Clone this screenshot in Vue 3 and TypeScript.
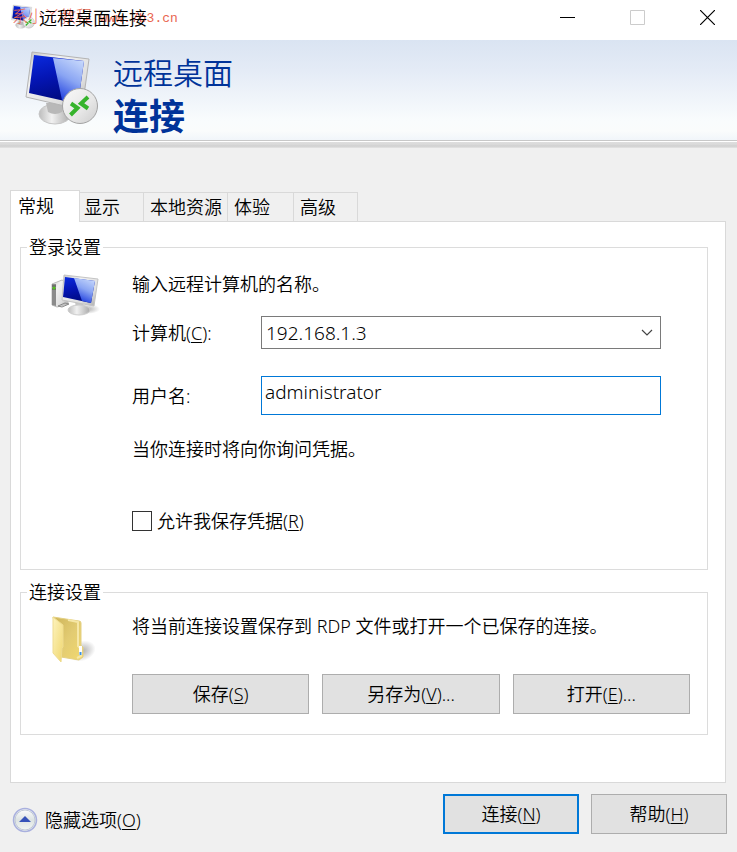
<script setup lang="ts">
import { ref } from 'vue'

interface Tab {
  id: string
  title: string
}

interface Action {
  id: string
  text: string
  key: string
  tail: string
}

const tabs: Tab[] = [
  { id: 'general', title: '常规' },
  { id: 'display', title: '显示' },
  { id: 'local', title: '本地资源' },
  { id: 'experience', title: '体验' },
  { id: 'advanced', title: '高级' },
]

const fileActions: Action[] = [
  { id: 'save', text: '保存', key: 'S', tail: '' },
  { id: 'save-as', text: '另存为', key: 'V', tail: '...' },
  { id: 'open', text: '打开', key: 'E', tail: '...' },
]

const activeTab = ref('general')
const computer = ref('192.168.1.3')
const userName = ref('administrator')
const allowSave = ref(false)
</script>

<template>
  <main class="window">
    <svg class="defs" width="0" height="0" aria-hidden="true">
      <defs>
        <linearGradient id="frame" x1="0" y1="0" x2="1" y2="1">
          <stop offset="0" stop-color="#c4c4c4" />
          <stop offset="0.3" stop-color="#f1f1f1" />
          <stop offset="0.7" stop-color="#dedede" />
          <stop offset="1" stop-color="#a9a9a9" />
        </linearGradient>
        <linearGradient id="screen" x1="0" y1="0" x2="0.3" y2="1">
          <stop offset="0" stop-color="#0a2be0" />
          <stop offset="0.5" stop-color="#0415b4" />
          <stop offset="1" stop-color="#000a80" />
        </linearGradient>
        <linearGradient id="shine" x1="0.7" y1="0" x2="0.3" y2="1">
          <stop offset="0" stop-color="#c3d5fb" />
          <stop offset="0.45" stop-color="#8aa5f3" />
          <stop offset="1" stop-color="#1232dc" />
        </linearGradient>
        <linearGradient id="base" x1="0" y1="0" x2="1" y2="0">
          <stop offset="0" stop-color="#bdbdbd" />
          <stop offset="0.4" stop-color="#f1f1f1" />
          <stop offset="1" stop-color="#a9a9a9" />
        </linearGradient>
        <linearGradient id="disc" x1="0" y1="0" x2="1" y2="1">
          <stop offset="0" stop-color="#f9f9f9" />
          <stop offset="0.6" stop-color="#e6e6e6" />
          <stop offset="1" stop-color="#cccccc" />
        </linearGradient>
        <linearGradient id="leaf" x1="0" y1="0" x2="1" y2="1">
          <stop offset="0" stop-color="#fdf3bd" />
          <stop offset="1" stop-color="#f0d76f" />
        </linearGradient>
        <linearGradient id="inner" x1="0" y1="0" x2="1" y2="1">
          <stop offset="0" stop-color="#cdb458" />
          <stop offset="0.5" stop-color="#e2cb72" />
          <stop offset="1" stop-color="#f2d96f" />
        </linearGradient>
        <linearGradient id="orb" x1="0" y1="0" x2="0" y2="1">
          <stop offset="0" stop-color="#ffffff" />
          <stop offset="0.5" stop-color="#dde3e3" />
          <stop offset="1" stop-color="#f6faf4" />
        </linearGradient>
        <radialGradient id="shade">
          <stop offset="0" stop-color="#777777" stop-opacity="0.6" />
          <stop offset="1" stop-color="#777777" stop-opacity="0" />
        </radialGradient>
        <symbol id="remote" viewBox="0 0 74 76">
          <ellipse cx="30" cy="63" rx="16" ry="10" fill="url(#base)" stroke="#c6c6c6" />
          <path d="M21 52h18l-2 9q-7 4-14 0z" fill="#b8b8b8" />
          <path d="M7 1 64 8 57 59 1 46Z" fill="url(#frame)" stroke="#b4b4b4" />
          <path d="M9 4 59 10 53 53 4 42Z" fill="url(#screen)" />
          <path d="M28 7 59 10 53 53 37 49Z" fill="url(#shine)" />
          <circle cx="55" cy="55" r="17.5" fill="url(#disc)" stroke="#a3a3a3" />
          <path d="m46 52.500 6.500 4.500-7 7M63 46l-7 6.500 7 5" fill="none" stroke="#36b42c" stroke-width="4" />
        </symbol>
      </defs>
    </svg>

    <header class="titlebar">
      <svg class="title-icon" aria-hidden="true"><use href="#remote" /></svg>
      <h1 class="title">远程桌面连接</h1>
      <span class="mark"><span class="mark-name">系小丫教程</span> www.7b3.cn</span>
      <div class="window-buttons">
        <button type="button" class="window-button" aria-label="最小化">
          <svg width="15" height="15" viewBox="0 0 15 15"><path d="M0 7.5h15" stroke="#000" /></svg>
        </button>
        <button type="button" class="window-button" aria-label="最大化" disabled>
          <svg width="15" height="15" viewBox="0 0 15 15"><path d="M.5.5h14v14H.5z" fill="none" stroke="#ccc" /></svg>
        </button>
        <button type="button" class="window-button" aria-label="关闭">
          <svg width="15" height="15" viewBox="0 0 15 15"><path d="m0 0 15 15M15 0 0 15" stroke="#000" stroke-width="1.2" /></svg>
        </button>
      </div>
    </header>

    <section class="banner">
      <svg class="banner-icon" aria-hidden="true"><use href="#remote" /></svg>
      <h2 class="banner-text">远程桌面<strong>连接</strong></h2>
    </section>

    <div class="content">
      <div class="tabs" role="tablist">
        <button
          v-for="tab in tabs"
          :key="tab.id"
          type="button"
          role="tab"
          class="tab"
          :class="[tab.id, { active: tab.id === activeTab }]"
          :aria-selected="tab.id === activeTab"
          @click="activeTab = tab.id"
        >{{ tab.title }}</button>
      </div>

      <div class="panel" role="tabpanel">
        <fieldset class="group login">
          <legend>登录设置</legend>
          <div class="group-body">
            <svg class="group-icon" viewBox="0 0 50 44" aria-hidden="true">
              <ellipse cx="36" cy="35" rx="13" ry="5" fill="url(#shade)" />
              <path d="M1 10 11 6l6 3v21L6 33l-5-2z" fill="url(#frame)" stroke="#bcbcbc" />
              <path d="M1 10h4v22l-4-1z" fill="#8b8b8b" />
              <path d="M1 12h4M1 15h4" stroke="#555" />
              <circle cx="3" cy="14" r="1.5" fill="#52c51c" />
              <path d="m7 32 7-3 4 1-7 3z" fill="none" stroke="#888" />
              <path d="M24 27h9l-1 8h-7z" fill="#c5c5c5" />
              <ellipse cx="28" cy="36" rx="11" ry="5" fill="url(#base)" stroke="#cccccc" />
              <path d="m13 1 34 4-4 27-32-6z" fill="url(#frame)" stroke="#c4c4c4" />
              <path d="m14 3 30 4-4 22-28-6z" fill="url(#screen)" />
              <path d="m23 4 21 3-4 22-9-2z" fill="url(#shine)" />
            </svg>
            <div class="login-fields">
              <p class="line">输入远程计算机的名称。</p>
              <div class="field computer">
                <label for="computer">计算机(<u>C</u>):</label>
                <div class="combo">
                  <select id="computer" v-model="computer">
                    <option>192.168.1.3</option>
                  </select>
                  <svg class="chevron" viewBox="0 0 12 7" aria-hidden="true"><path d="m1 1 5 5 5-5" fill="none" stroke="#444" stroke-width="1.2" /></svg>
                </div>
              </div>
              <div class="field user">
                <label for="user">用户名:</label>
                <input id="user" v-model="userName" type="text" autocomplete="off" spellcheck="false" />
              </div>
              <p class="line prompt">当你连接时将向你询问凭据。</p>
              <label class="check"><input v-model="allowSave" type="checkbox" /><span>允许我保存凭据(<u>R</u>)</span></label>
            </div>
          </div>
        </fieldset>

        <fieldset class="group connection">
          <legend>连接设置</legend>
          <div class="group-body">
            <svg class="group-icon" viewBox="0 0 50 50" aria-hidden="true">
              <ellipse cx="31" cy="37" rx="14" ry="10" fill="url(#shade)" transform="rotate(-20 31 37)" />
              <path d="m2 3 26 4q2 0 2 2v23l2 1v10l-4 3-18-3z" fill="url(#inner)" stroke="#e4d083" />
              <path d="m17 6 10 2v24l3 3v7l-4 2" fill="none" stroke="#f6e7a6" stroke-width="2" />
              <path d="m2 3 10 8v22l-1 1-1 14-8-9z" fill="url(#leaf)" stroke="#efdc90" />
              <path d="M29.500 32v9" stroke="#fff" stroke-width="3" />
              <path d="M29.500 38v3" stroke="#3c91e0" stroke-width="2" />
            </svg>
            <div>
              <p class="line">将当前连接设置保存到 RDP 文件或打开一个已保存的连接。</p>
              <div class="file-actions">
                <button v-for="action in fileActions" :key="action.id" type="button" class="button">{{ action.text }}(<u>{{ action.key }}</u>){{ action.tail }}</button>
              </div>
            </div>
          </div>
        </fieldset>
      </div>
    </div>

    <footer class="footer">
      <button type="button" class="toggle">
        <svg width="26" height="26" viewBox="0 0 26 26" aria-hidden="true">
          <circle cx="13" cy="13" r="11.500" fill="url(#orb)" stroke="#a9b0de" stroke-width="1.500" />
          <circle cx="13" cy="13" r="10" fill="none" stroke="#c0c8d6" />
          <path d="m7 15 6-6 6 6z" fill="#3653b8" />
        </svg>
        <span>隐藏选项(<u>O</u>)</span>
      </button>
      <div class="footer-actions">
        <button type="button" class="button primary">连接(<u>N</u>)</button>
        <button type="button" class="button">帮助(<u>H</u>)</button>
      </div>
    </footer>
  </main>
</template>

<style>
body {
  margin: 0;
  background: #f0f0f0;
}
</style>

<style scoped>
* {
  box-sizing: border-box;
}

.window {
  min-height: 100vh;
  background: #f0f0f0;
  color: #000;
  font: 350 18px/24px "Noto Sans", "Noto Sans CJK SC", sans-serif;
}

.defs {
  position: absolute;
}

h1,
h2,
p {
  margin: 0;
  font-weight: inherit;
}

button,
input,
select {
  margin: 0;
  font: inherit;
  color: inherit;
}

u {
  text-underline-offset: 2px;
  text-decoration-thickness: 1px;
}

.titlebar {
  position: relative;
  display: flex;
  height: 40px;
  padding-left: 11px;
  background: #fff;
}

.title-icon {
  width: 24px;
  height: 26px;
  margin: 4px 4px 0 0;
}

.title {
  position: relative;
  z-index: 1;
  padding-top: 6px;
  font-size: 18px;
}

.mark {
  position: absolute;
  left: 12px;
  top: 6px;
  color: #e9654f;
  font: 13px/24px "Liberation Mono", "Noto Sans CJK SC", monospace;
  white-space: nowrap;
}

.mark-name {
  font-size: 16px;
  font-weight: 300;
}

.window-buttons {
  display: flex;
  gap: 10px;
  height: 35px;
  margin-left: auto;
}

.window-button {
  display: flex;
  align-items: center;
  justify-content: center;
  width: 60px;
  padding: 0;
  border: 0;
  background: none;
}

.banner {
  position: relative;
  display: flex;
  height: 108px;
  padding: 11px 0 0 25px;
  background: linear-gradient(#dae4f2, #e4ebf6 30%, #f9fcfd 80%, #fafcfc 90%, #f0f5fa) 0 0 / 100% 101px no-repeat;
}

.banner::after {
  content: "";
  position: absolute;
  inset: auto 0 0;
  height: 7px;
  border-top: 1px solid #c8c8c8;
  background: linear-gradient(#fff 1px, #dfdfdf 1px, #d8d8d8 4px, #cfcfcf 5px, #e4e4e4);
}

.banner-icon {
  width: 74px;
  height: 76px;
  margin-right: 14px;
}

.banner-text {
  color: #039;
  font-size: 30px;
  line-height: 44px;
}

.banner-text strong {
  display: block;
  font-size: 36px;
  font-weight: 700;
}

.content {
  padding: 42px 11px 0 10px;
}

.tabs {
  display: flex;
  align-items: flex-end;
}

.tab {
  height: 29px;
  padding: 0 23px 0 6px;
  border: solid #d9d9d9;
  border-width: 1px 1px 0 0;
  background: #f0f0f0;
}

.tab.display {
  padding-left: 4px;
}

.tab.local {
  padding-right: 5px;
}

.tab.advanced {
  padding-right: 21px;
}

.tab.active {
  position: relative;
  height: 32px;
  margin-bottom: -1px;
  padding: 0 25px 2px 7px;
  border-width: 1px 1px 0;
  background: #fff;
}

.panel {
  padding: 13px 17px 47px 9px;
  border: 1px solid #d9d9d9;
  background: #fff;
}

.group {
  min-width: 0;
  margin: 0;
  border: 1px solid #dcdcdc;
}

.group legend {
  padding: 0 2px;
}

.login {
  padding: 13px 46px 36px 6px;
}

.connection {
  margin-top: 10px;
  padding: 10px 17px 20px 6px;
}

.group-body {
  display: grid;
  grid-template-columns: 105px 1fr;
}

.group-icon {
  width: 50px;
  height: 50px;
  margin-left: 24px;
}

.login .group-icon {
  height: 44px;
  margin-top: 2px;
}

.field {
  display: grid;
  grid-template-columns: 129px 1fr;
  align-items: center;
}

.computer {
  margin-top: 20px;
}

.user {
  margin-top: 27px;
}

.combo {
  position: relative;
}

.combo select {
  display: block;
  width: 100%;
  height: 33px;
  padding: 0 32px 0 4px;
  border: 1px solid #7a7a7a;
  border-radius: 0;
  appearance: none;
  background: #fff;
  font-size: 19px;
}

.chevron {
  position: absolute;
  right: 8px;
  top: 13px;
  width: 12px;
  height: 7px;
  pointer-events: none;
}

.user input {
  width: 100%;
  height: 39px;
  padding: 0 3px 8px;
  border: 1px solid #0078d7;
  outline: 0;
  background: #fff;
  font-size: 19px;
}

.prompt {
  margin-top: 22px;
}

.check {
  display: flex;
  align-items: center;
  gap: 5px;
  margin-top: 48px;
}

.check input {
  width: 20px;
  height: 20px;
  border: 1px solid #333;
  appearance: none;
  background: #fff;
}

.check input:checked {
  background: #333;
  box-shadow: inset 0 0 0 3px #fff;
}

.file-actions {
  display: grid;
  grid-template-columns: repeat(3, 1fr);
  gap: 13px;
  margin-top: 36px;
}

.button {
  height: 40px;
  padding: 0 8px;
  border: 1px solid #adadad;
  background: #e1e1e1;
}

.button.primary {
  border: 2px solid #0078d7;
}

.footer {
  display: flex;
  align-items: center;
  justify-content: space-between;
  padding: 11px 10px 18px 12px;
}

.toggle {
  display: flex;
  align-items: center;
  gap: 7px;
  padding: 12px 0 0;
  border: 0;
  background: none;
}

.footer-actions {
  display: flex;
  gap: 12px;
}

.footer-actions .button {
  width: 136px;
}
</style>
